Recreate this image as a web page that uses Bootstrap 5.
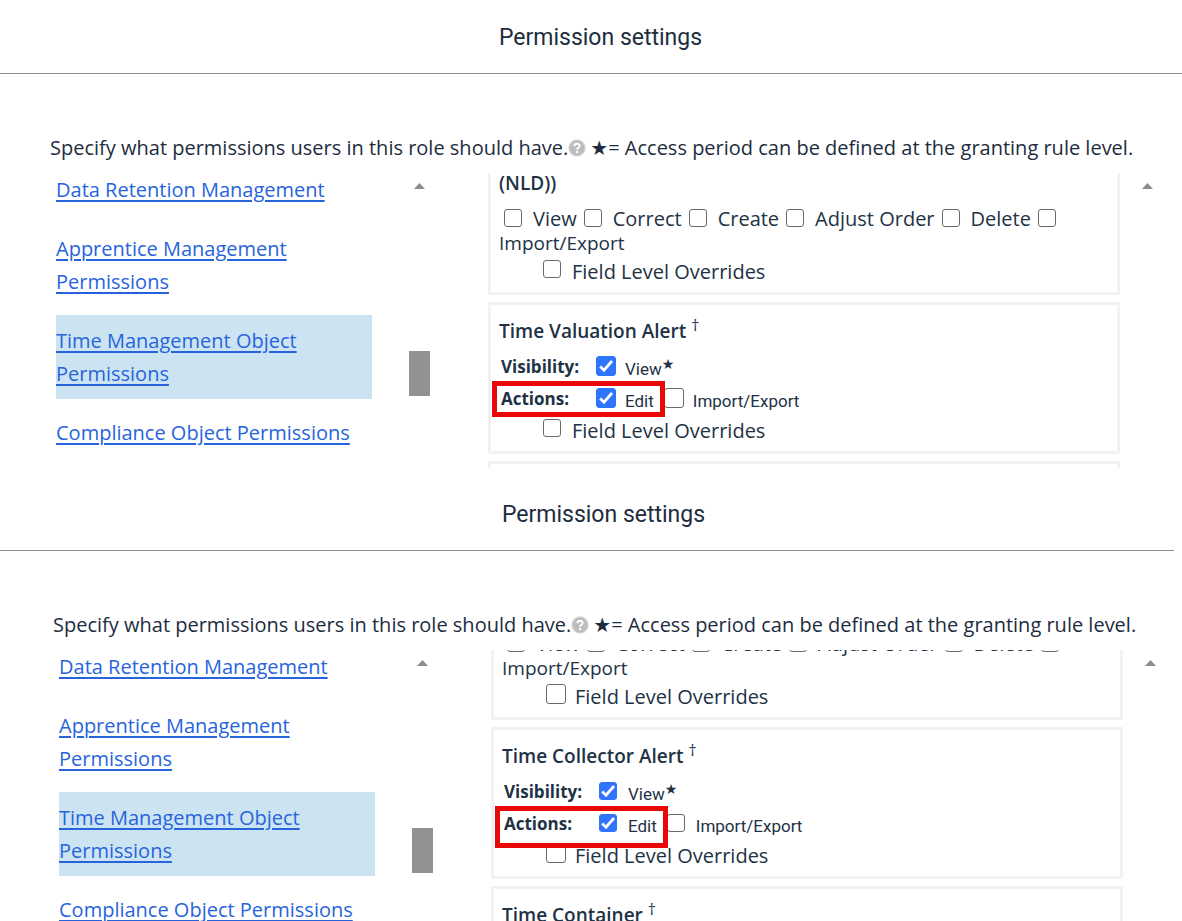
<!DOCTYPE html>
<html lang="en">
<head>
<meta charset="utf-8">
<meta name="viewport" content="width=device-width, initial-scale=1">
<title>Permission settings</title>
<link rel="stylesheet" href="https://cdn.jsdelivr.net/npm/bootstrap@5.3.0/dist/css/bootstrap.min.css">
<style>
  body { font-family: "Open Sans", "Noto Sans", sans-serif; font-size: 20px; line-height: 25px; color: #223245; background: #fff; }
  .perm-view { --shift: 0px; --act-box: 20px; --field-box: 18px; --mark-h: 36px; --scrolled: 0px; padding-bottom: 9px; }
  .perm-view.second { --shift: 3px; --act-box: 18px; --field-box: 20px; --mark-h: 42px; --scrolled: -52px; padding-bottom: 0; }

  .view-head { height: 74px; padding-top: 2px; padding-left: 19px; border-bottom: 1px solid #8c8c8c; }
  .second .view-head { margin-right: 8px; padding-left: 33px; }
  .view-head h2 { font-family: Roboto, sans-serif; font-size: 23px; line-height: 30px; font-weight: 400; color: #1d2d3e; }

  .intro { margin-top: 59px; margin-bottom: 10px; padding-left: calc(50px + var(--shift)); line-height: 30px; color: #1d2d3e; }
  .help-btn { width: 18px; height: 18px; }
  .star { font-family: "DejaVu Sans", sans-serif; }

  .panes { padding-left: calc(56px + var(--shift)); padding-right: calc(24px - var(--shift)); height: 295px; }
  .second .panes { height: auto; min-height: 0; }

  .cat-list { flex: 0 0 316px; gap: 8px; line-height: 33px; }
  .cat-list li { padding: 9px 0; }
  .cat-list li:first-child { padding-top: 0; }
  .cat-list li.current { background: #cce4f1; }
  .cat-list a { color: #2764dc; text-decoration: underline; text-decoration-thickness: 2px; text-underline-offset: 3px; }

  .sbar { flex: 0 0 21px; padding-top: 10px; }
  .sbar-left { margin-left: 37px; margin-right: 58px; }
  .sbar-right { margin-left: 17px; }
  .sbar-thumb { width: 21px; height: 45px; margin-top: 162px; background: #929292; }

  .objects { gap: 7px; }
  .objects > :first-child { margin-top: var(--scrolled); }
  .obj { flex-shrink: 0; border: 3px solid #f2f2f2; padding: 14px 8px 8px; }
  .obj.cut { border-top: 0; padding-top: 0; }
  .obj h3 { font-size: 19px; line-height: 24px; font-weight: 600; }
  .obj.cut h3 { line-height: 20px; margin-bottom: 14px; }
  .obj h3 sup { font-size: 16px; line-height: 0; top: -7px; font-weight: 400; }

  .tick { appearance: none; width: 18px; height: 18px; border: 1px solid #6a6a6a; border-radius: 3px; background: #fff; margin: 0; flex: none; }
  .tick:checked { border-color: #2e74fd; background: #2e74fd url("data:image/svg+xml,%3Csvg xmlns='http://www.w3.org/2000/svg' viewBox='0 0 16 16'%3E%3Cpath d='M2.2 8.4 6 12.2 14 3' fill='none' stroke='%23fff' stroke-width='2.8'/%3E%3C/svg%3E") center / 16px 16px no-repeat; }
  .inline-opts { line-height: 24px; }
  .inline-opts .wrapped { font-size: 19px; }
  .inline-opts .tick { margin: 0 11px 0 7px; vertical-align: -1px; }
  .inline-opts .tick:first-child { margin-left: 5px; }

  .act-row { height: 32px; padding-left: 2px; }
  .act-rows { margin-top: 7px; }
  .act-name { flex: 0 0 95px; font-size: 17px; font-weight: 700; }
  .act-row .tick { width: var(--act-box); height: var(--act-box); }
  .act-row label { margin-top: 6px; margin-left: calc(29px - var(--act-box)); font-family: Roboto, sans-serif; font-size: 17px; }
  .act-row .star { font-size: 14px; margin-top: -4px; }
  .act-row .other { margin-left: 10px; }
  .act-mark { left: -7px; top: -1px; width: 173px; height: var(--mark-h); border: 5px solid #e90707; pointer-events: none; }
  .field-row { margin-top: 4px; padding-left: 44px; }
  .field-row .tick { width: var(--field-box); height: var(--field-box); margin-bottom: 5px; }
  .field-row label { margin-left: calc(29px - var(--field-box)); }
</style>
</head>
<body class="vh-100 overflow-hidden d-flex flex-column">

<section class="perm-view flex-shrink-0">
  <header class="view-head d-flex align-items-center justify-content-center"><h2 class="m-0">Permission settings</h2></header>
  <div class="intro d-flex align-items-center text-nowrap">
    <span>Specify what permissions users in this role should have.</span>
    <button type="button" class="help-btn btn p-0 border-0 d-flex" aria-label="Help">
      <svg width="18" height="18" viewBox="0 0 18 18"><circle cx="9" cy="9" r="8" fill="#bdbdbd"/><circle cx="9" cy="9" r="8.2" fill="none" stroke="#d6d6d6" stroke-width="1.4" stroke-dasharray="1.4 1.2"/><path d="M6.4 7.2c0-3.4 5.4-3.2 5.2-.2-.1 1.700-2.500 1.800-2.500 3.700" fill="none" stroke="#fff" stroke-width="1.900"/><circle cx="9.100" cy="13" r="1.200" fill="#fff"/></svg>
    </button>
    <span class="ms-1"><span class="star">★</span>= Access period can be defined at the granting rule level.</span>
  </div>
  <div class="panes d-flex overflow-hidden">
    <ul class="cat-list list-unstyled d-flex flex-column m-0">
      <li><a href="#">Data Retention Management</a></li>
      <li><a href="#">Apprentice Management Permissions</a></li>
      <li class="current"><a href="#">Time Management Object Permissions</a></li>
      <li><a href="#">Compliance Object Permissions</a></li>
    </ul>
    <div class="sbar sbar-left d-flex flex-column align-items-center">
      <svg width="11" height="6" viewBox="0 0 11 6"><path d="M0 6 5.500 0 11 6z" fill="#8c8c8c"/></svg>
      <div class="sbar-thumb"></div>
    </div>
    <div class="objects flex-grow-1 d-flex flex-column">
      <article class="obj cut">
        <h3>(NLD))</h3>
        <div class="inline-opts">
          <input class="tick" type="checkbox" id="a1"><label for="a1">View</label><input class="tick" type="checkbox" id="a2"><label for="a2">Correct</label><input class="tick" type="checkbox" id="a3"><label for="a3">Create</label><input class="tick" type="checkbox" id="a4"><label for="a4">Adjust Order</label><input class="tick" type="checkbox" id="a5"><label for="a5">Delete</label><input class="tick" type="checkbox" id="a6"><br><label class="wrapped" for="a6">Import/Export</label>
        </div>
        <div class="field-row d-flex align-items-center"><input class="tick" type="checkbox" id="a7"><label for="a7">Field Level Overrides</label></div>
      </article>
      <article class="obj">
        <h3 class="m-0">Time Valuation Alert <sup>†</sup></h3>
        <div class="act-rows">
          <div class="act-row d-flex align-items-center"><span class="act-name">Visibility:</span><input class="tick" type="checkbox" id="a8" checked><label for="a8">View</label><span class="star">★</span></div>
          <div class="act-row d-flex align-items-center position-relative"><span class="act-name">Actions:</span><input class="tick" type="checkbox" id="a9" checked><label for="a9">Edit</label><input class="tick other" type="checkbox" id="a10"><label for="a10">Import/Export</label><div class="act-mark position-absolute"></div></div>
        </div>
        <div class="field-row d-flex align-items-center"><input class="tick" type="checkbox" id="a11"><label for="a11">Field Level Overrides</label></div>
      </article>
      <article class="obj"></article>
    </div>
    <div class="sbar sbar-right d-flex flex-column align-items-center">
      <svg width="11" height="6" viewBox="0 0 11 6"><path d="M0 6 5.500 0 11 6z" fill="#8c8c8c"/></svg>
    </div>
  </div>
</section>

<section class="perm-view second flex-grow-1 d-flex flex-column overflow-hidden">
  <header class="view-head flex-shrink-0 d-flex align-items-center justify-content-center"><h2 class="m-0">Permission settings</h2></header>
  <div class="intro d-flex align-items-center text-nowrap">
    <span>Specify what permissions users in this role should have.</span>
    <button type="button" class="help-btn btn p-0 border-0 d-flex" aria-label="Help">
      <svg width="18" height="18" viewBox="0 0 18 18"><circle cx="9" cy="9" r="8" fill="#bdbdbd"/><circle cx="9" cy="9" r="8.2" fill="none" stroke="#d6d6d6" stroke-width="1.4" stroke-dasharray="1.4 1.2"/><path d="M6.4 7.2c0-3.4 5.4-3.2 5.2-.2-.1 1.700-2.500 1.800-2.500 3.700" fill="none" stroke="#fff" stroke-width="1.900"/><circle cx="9.100" cy="13" r="1.200" fill="#fff"/></svg>
    </button>
    <span class="ms-1"><span class="star">★</span>= Access period can be defined at the granting rule level.</span>
  </div>
  <div class="panes flex-grow-1 d-flex overflow-hidden">
    <ul class="cat-list list-unstyled d-flex flex-column m-0">
      <li><a href="#">Data Retention Management</a></li>
      <li><a href="#">Apprentice Management Permissions</a></li>
      <li class="current"><a href="#">Time Management Object Permissions</a></li>
      <li><a href="#">Compliance Object Permissions</a></li>
    </ul>
    <div class="sbar sbar-left d-flex flex-column align-items-center">
      <svg width="11" height="6" viewBox="0 0 11 6"><path d="M0 6 5.500 0 11 6z" fill="#8c8c8c"/></svg>
      <div class="sbar-thumb"></div>
    </div>
    <div class="objects flex-grow-1 d-flex flex-column">
      <article class="obj cut">
        <h3>(NLD))</h3>
        <div class="inline-opts">
          <input class="tick" type="checkbox" id="b1"><label for="b1">View</label><input class="tick" type="checkbox" id="b2"><label for="b2">Correct</label><input class="tick" type="checkbox" id="b3"><label for="b3">Create</label><input class="tick" type="checkbox" id="b4"><label for="b4">Adjust Order</label><input class="tick" type="checkbox" id="b5"><label for="b5">Delete</label><input class="tick" type="checkbox" id="b6"><br><label class="wrapped" for="b6">Import/Export</label>
        </div>
        <div class="field-row d-flex align-items-center"><input class="tick" type="checkbox" id="b7"><label for="b7">Field Level Overrides</label></div>
      </article>
      <article class="obj">
        <h3 class="m-0">Time Collector Alert <sup>†</sup></h3>
        <div class="act-rows">
          <div class="act-row d-flex align-items-center"><span class="act-name">Visibility:</span><input class="tick" type="checkbox" id="b8" checked><label for="b8">View</label><span class="star">★</span></div>
          <div class="act-row d-flex align-items-center position-relative"><span class="act-name">Actions:</span><input class="tick" type="checkbox" id="b9" checked><label for="b9">Edit</label><input class="tick other" type="checkbox" id="b10"><label for="b10">Import/Export</label><div class="act-mark position-absolute"></div></div>
        </div>
        <div class="field-row d-flex align-items-center"><input class="tick" type="checkbox" id="b11"><label for="b11">Field Level Overrides</label></div>
      </article>
      <article class="obj"><h3 class="m-0">Time Container <sup>†</sup></h3></article>
    </div>
    <div class="sbar sbar-right d-flex flex-column align-items-center">
      <svg width="11" height="6" viewBox="0 0 11 6"><path d="M0 6 5.500 0 11 6z" fill="#8c8c8c"/></svg>
    </div>
  </div>
</section>

<script src="https://cdn.jsdelivr.net/npm/bootstrap@5.3.0/dist/js/bootstrap.bundle.min.js"></script>
</body>
</html>
